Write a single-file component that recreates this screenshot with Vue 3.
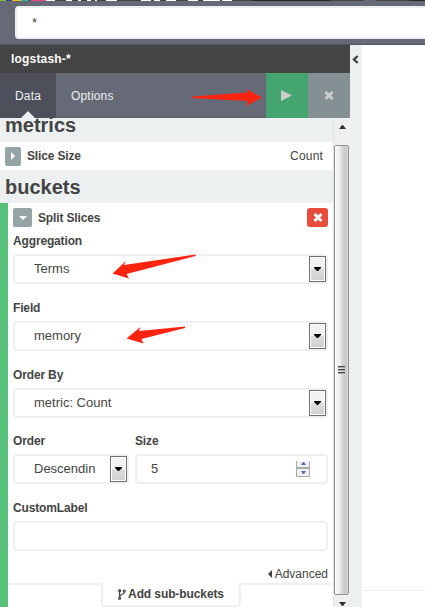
<script setup>
import { ref } from 'vue'
const index = ref('logstash-*')
const selects = [
  { label: 'Aggregation', value: 'Terms' },
  { label: 'Field', value: 'memory' },
  { label: 'Order By', value: 'metric: Count' },
]
</script>

<template>
  <div class="page">
    <div class="strip"></div>
    <header><div class="query">*</div></header>
    <div class="body">
      <aside>
        <div class="index">{{ index }}</div>
        <nav>
          <div class="tab active">Data</div>
          <div class="tab">Options</div>
          <div class="apply"><svg width="11" height="11" viewBox="0 0 11 11"><path d="M0 0L11 5.5L0 11Z" fill="#ccc" /></svg></div>
          <div class="discard"><svg width="10" height="9" viewBox="0 0 10 9"><path d="M1.5 1L8.5 8M8.5 1L1.5 8" stroke="#ccc" stroke-width="3" /></svg></div>
        </nav>
        <div class="scroller">
          <div class="content">
            <h2 class="metrics"><span>metrics</span></h2>
            <div class="slice"><i class="toggle small"><svg width="4" height="8" viewBox="0 0 4 8"><path d="M0 0L4 4L0 8Z" fill="#fff" /></svg></i><b>Slice Size</b><span class="count">Count</span></div>
            <h2 class="buckets"><span>buckets</span></h2>
            <section>
              <div class="split"><i class="toggle"><svg width="8" height="4" viewBox="0 0 8 4"><path d="M0 0H8L4 4Z" fill="#fff" /></svg></i><b>Split Slices</b><i class="remove"><svg width="10" height="9" viewBox="0 0 10 9"><path d="M1.5 1L8.5 8M8.5 1L1.5 8" stroke="#fff" stroke-width="3" /></svg></i></div>
              <div v-for="s in selects" :key="s.label" class="field">
                <label>{{ s.label }}</label>
                <div class="input"><span>{{ s.value }}</span><i class="drop"><svg width="7" height="4" viewBox="0 0 7 4"><path d="M0 0H7V1L4 4H3L0 1Z" /></svg></i></div>
              </div>
              <div class="pair">
                <div class="field order"><label>Order</label><div class="input"><span>Descendin</span><i class="drop"><svg width="7" height="4" viewBox="0 0 7 4"><path d="M0 0H7V1L4 4H3L0 1Z" /></svg></i></div></div>
                <div class="field size"><label>Size</label><div class="input"><span>5</span><i class="spin"><em><svg width="5" height="3" viewBox="0 0 5 3"><path d="M0 3L2 0H3L5 3Z" /></svg></em><em><svg width="5" height="3" viewBox="0 0 5 3"><path d="M0 0H5L3 3H2Z" /></svg></em></i></div></div>
              </div>
              <div class="field custom"><label>CustomLabel</label><div class="input"></div></div>
              <div class="advanced"><svg width="4" height="8" viewBox="0 0 4 8"><path d="M4 0V8L0 4Z" fill="#444" /></svg><span>Advanced</span></div>
              <div class="bottom"><div class="line left"></div><div class="add"><svg width="8" height="11" viewBox="0 0 8 11" fill="none" stroke="#444" stroke-width="1.2"><circle cx="1.6" cy="1.7" r="1" /><circle cx="6.3" cy="2" r="1" /><circle cx="1.6" cy="9.3" r="1" /><path d="M1.6 2.7V8.3M6.3 3C6.3 6 1.6 5 1.6 8" /></svg><b>Add sub-buckets</b></div><div class="line right"></div></div>
            </section>
          </div>
          <div class="bar">
            <div class="arrow up"><svg width="7" height="4" viewBox="0 0 7 4"><path d="M0 4L3 0H4L7 4Z" /></svg></div>
            <div class="thumb"><i></i><i></i><i></i></div>
            <div class="arrow"><svg width="7" height="4" viewBox="0 0 7 4"><path d="M0 0H7L4 4H3Z" /></svg></div>
          </div>
        </div>
      </aside>
      <div class="collapse"><svg width="7" height="9" viewBox="0 0 7 9"><path d="M5.7 1L2 4.5L5.7 8" fill="none" stroke="#444" stroke-width="2.4" /></svg></div>
      <main><div></div></main>
    </div>
    <svg class="marks" width="425" height="607" viewBox="0 0 425 607" fill="#ff2410">
      <path d="M192 96.5L248 92.5L246 89L262 97.5L246 106L248 101L192 98Z" />
      <path d="M195.5 254.5L124 265L126 261L112.5 273.5L129 278.5L126.5 274L195.5 256Z" />
      <path d="M185 326.5L139 331L140.5 327L126.5 338.5L143.5 343.5L141.5 339L185 328Z" />
    </svg>
  </div>
</template>

<style>
body { margin: 0; overflow: hidden; }
</style>
<style scoped>
* { box-sizing: border-box; }
.page { width: 425px; height: 607px; position: relative; overflow: hidden; background: #fff; color: #444; font: 12px/16px "Liberation Sans", Arial, sans-serif; letter-spacing: .18px; }
svg { display: block; flex-shrink: 0; }
.strip { height: 1px; background: linear-gradient(90deg, #86bd3d 0 6px, #294992 6px 12px, #f0b91b 12px 21px, #32b4a8 21px 28px, #356562 28px 31px, #ee438d 31px 46px, #fff 46px 55px, #444 55px 66px, #fff 66px 72px, #444 72px 78px, #fff 78px 81px, #444 81px 87px, #fff 87px 91px, #444 91px 95px, #fff 95px 97px, #444 97px 106px, #fff 106px 117px, #444 117px 141px, #fff 141px 151px, #444 151px 154px, #fff 154px 160px, #444 160px 166px, #fff 166px 176px, #444 176px 188px, #fff 188px 198px, #444 198px 203px, #fff 203px 220px, #444 220px 222px, #fff 222px 232px, #444 232px 252px, #292929 252px 330px, #444 330px 364px, #666a77 364px 376px, #444 376px 409px, #292929 409px); }
header { height: 44px; padding: 5px 0 0 15px; background: #666a77; border-bottom: 1px solid #515561; }
.query { width: 430px; height: 33px; padding: 7px 0 0 15px; border: 2px solid #ecf0f1; border-radius: 4px; background: #fff; font-size: 13px; }
.body { display: flex; height: 562px; }
aside { width: 350px; height: 562px; }
.index { height: 28px; padding: 6px 11px; background: #444; color: #fff; font-weight: bold; }
nav { display: flex; height: 45px; background: linear-gradient(#666a77 0 42px, #595d69); color: #ecf0f1; }
.tab { display: flex; align-items: center; padding: 0 15px; }
.tab.active { width: 56px; background: #4d505b; position: relative; }
.tab.active::after { content: ""; position: absolute; left: 21px; bottom: 0; border: 7px solid transparent; border-top: 0; border-bottom-color: #ecf0f1; }
.apply, .discard { width: 42px; display: flex; align-items: center; justify-content: center; }
.apply { margin-left: auto; background: #45a571; }
.apply svg { margin-right: 1px; }
.discard { background: #849093; }
.scroller { display: flex; height: 489px; overflow: hidden; background: #ecf0f1; }
.content { width: 333px; height: 489px; overflow: hidden; }
h2 { margin: 0; padding-left: 5px; font-size: 20px; line-height: 24px; letter-spacing: 0; background: #ecf0f1; }
.metrics { height: 24px; padding-bottom: 10px; line-height: 14px; }
.metrics span { display: block; }
.slice { height: 28px; display: flex; align-items: center; padding: 0 10px 0 5px; background: #fff; }
.slice b, .split b, label { letter-spacing: -.15px; }
.slice b { margin-left: 6px; }
.count { margin-left: auto; }
.toggle, .remove { display: flex; align-items: center; justify-content: center; width: 19px; height: 19px; background: #95a5a6; border-radius: 2px; }
.small { width: 16px; }
.buckets { height: 33px; padding-top: 5px; }
section { height: 404px; border-left: 8px solid #57c17b; background: #fff; }
.split { height: 29px; padding: 5px; display: flex; align-items: center; }
.split b { margin-left: 6px; }
.remove { width: 21px; margin-left: auto; background: #e74c3c; border-radius: 3px; }
.field { height: 67px; padding: 1px 5px 0; }
.field:nth-child(4) { height: 66px; }
label { display: block; height: 21px; font-weight: bold; }
.input { height: 30px; border: 2px solid #ecf0f1; border-radius: 4px; display: flex; align-items: center; padding-left: 19px; background: #fff; font-size: 13px; letter-spacing: 0; }
.drop { width: 17px; height: 26px; margin-left: auto; border: 1px solid #707070; box-shadow: inset 0 0 0 1px #fff; background: linear-gradient(#f2f2f2 0 50%, #ddd 50%, #cfcfcf); display: flex; align-items: center; justify-content: center; }
.pair { display: flex; }
.order { width: 121px; padding-right: 0; }
.size { flex: 1; padding-left: 5px; }
.size .input { padding-left: 14px; margin-left: 1px; }
.size label { margin-left: 1px; }
.spin { width: 14px; height: 16px; margin-left: auto; margin-right: 16px; margin-top: -1px; border: 1px solid #aaa; border-top: 0; display: flex; flex-direction: column; }
.spin em { flex: 1; display: flex; align-items: center; justify-content: center; background: #f0f0f0; }
.spin em + em { border-top: 2px solid #aaa; }
.spin path { fill: #586db5; }
.custom { height: 64px; }
.advanced { height: 20px; padding: 2px 5px 0 0; display: flex; justify-content: flex-end; align-items: center; gap: 3px; letter-spacing: 0; }
.bottom { display: flex; height: 24px; }
.line { border-top: 2px solid #ecf0f1; }
.left { width: 93px; }
.right { flex: 1; }
.add { width: 140px; height: 24px; border: 2px solid #ecf0f1; border-top: 0; border-radius: 0 0 4px 4px; display: flex; align-items: center; justify-content: center; gap: 2px; letter-spacing: -.1px; }
.bar { width: 17px; background: #f0f0f0; border-left: 1px solid #e2e2e2; }
.arrow { height: 17px; padding: 7px 5px 0; }
.arrow path { fill: #333; }
.arrow.up { height: 27px; }
.thumb { width: 15px; height: 450px; border: 1px solid #929292; border-radius: 2px; background: linear-gradient(90deg, #fff 0 1px, #f1f1f1 2px 5px, #ddd 6px, #c6c6c8 11px, #ddd); display: flex; flex-direction: column; align-items: center; justify-content: center; gap: 1px; }
.thumb i { width: 7px; height: 2px; border-top: 1px solid #444; border-bottom: 1px solid #aaa; }
.collapse { width: 12px; background: #ecf0f1; padding: 10px 2px; }
main { flex: 1; padding-top: 545px; }
main div { border-top: 1px solid #ecf0f1; }
.marks { position: absolute; left: 0; top: 0; pointer-events: none; }
</style>
